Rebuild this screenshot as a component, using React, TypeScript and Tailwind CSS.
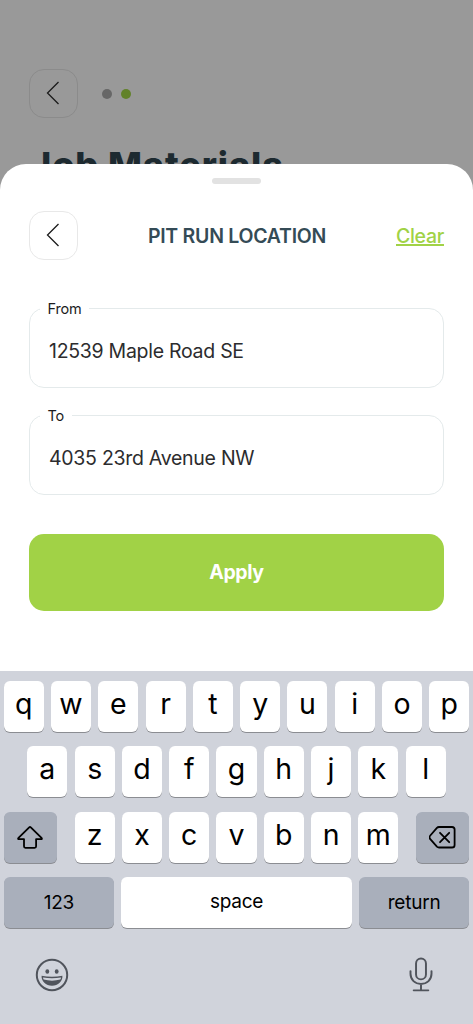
import React from "react";

const BackButton = ({ className }: { className: string }) => {
  return (
    <button
      aria-label="Back"
      className={`w-[49px] h-[49px] rounded-[15px] border flex items-center justify-center pr-[2px] pb-[1px] ${className}`}
    >
      <svg width="14" height="24" viewBox="0 0 14 24" fill="none">
        <path d="M12.5 1L1.5 12l11 11" stroke="currentColor" strokeWidth="1.3" />
      </svg>
    </button>
  );
};

const Field = ({ label, value }: { label: string; value: string }) => {
  return (
    <fieldset className="h-[87px] rounded-[15px] border border-[#e4eaeb] pl-[10px]">
      <legend className="pl-[7.5px] pr-2 text-[14.5px] leading-[16px] tracking-[-0.2px] text-[#1c1c1e]">
        {label}
      </legend>
      <p className="mt-[20px] pl-[9px] text-[19.5px] leading-[28px] tracking-[-0.28px] text-[#2c2c2e]">
        {value}
      </p>
    </fieldset>
  );
};

const Key = ({ letter }: { letter: string }) => {
  return (
    <button className="w-[40.1px] h-[51px] rounded-[6px] bg-white shadow-[0_1px_0_#8b8d92] text-[28.5px] leading-[29px] font-normal text-black flex justify-center pt-[8px]">
      {letter}
    </button>
  );
};

const DarkKey = ({
  className,
  children,
}: {
  className: string;
  children: React.ReactNode;
}) => {
  return (
    <button
      className={`h-[51px] rounded-[6px] bg-[#a9afbb] shadow-[0_1px_0_#8b8d92] text-black text-[19px] tracking-[-0.2px] flex items-center justify-center ${className}`}
    >
      {children}
    </button>
  );
};

const Keyboard = () => {
  return (
    <div className="h-[353px] bg-[#d0d3db] px-[3.7px] pt-[9.5px] flex flex-col">
      <div className="flex flex-col gap-[14.5px]">
        <div className="flex justify-between">
          {"qwertyuiop".split("").map((l) => (
            <Key key={l} letter={l} />
          ))}
        </div>
        <div className="flex justify-center gap-[7.2px]">
          {"asdfghjkl".split("").map((l) => (
            <Key key={l} letter={l} />
          ))}
        </div>
        <div className="flex justify-between">
          <DarkKey className="w-[53px]">
            <svg width="26" height="23" viewBox="0 0 26 23" fill="none">
              <path
                d="M12.2 1.3a1.2 1.2 0 0 1 1.6 0l10.7 10.6c.7.8.4 1.3-.4 1.3h-5v7.1c0 .9-.5 1.5-1.4 1.5H8.4C7.5 21.8 7 21.2 7 20.3v-7.1H2c-.9 0-1.2-.6-.5-1.3z"
                stroke="currentColor"
                strokeWidth="1.8"
                strokeLinejoin="round"
              />
            </svg>
          </DarkKey>
          <div className="flex gap-[7.2px]">
            {"zxcvbnm".split("").map((l) => (
              <Key key={l} letter={l} />
            ))}
          </div>
          <DarkKey className="w-[53px]">
            <svg width="27" height="23" viewBox="0 0 27 23" fill="none">
              <path
                d="M10 1h13a2.6 2.6 0 0 1 2.6 2.6v15.3a2.6 2.6 0 0 1-2.6 2.6H10a3 3 0 0 1-2.1-.9L1.3 13.2a2.7 2.7 0 0 1 0-3.7L7.9 1.9A3 3 0 0 1 10 1z"
                stroke="currentColor"
                strokeWidth="1.8"
              />
              <path
                d="M11 6.8l9.2 9.4M20.2 6.8L11 16.2"
                stroke="currentColor"
                strokeWidth="1.8"
                strokeLinecap="round"
              />
            </svg>
          </DarkKey>
        </div>
        <div className="flex gap-[7.2px]">
          <DarkKey className="w-[110.5px] pt-[2px]">123</DarkKey>
          <button className="flex-1 h-[51px] rounded-[6px] bg-white shadow-[0_1px_0_#8b8d92] text-[19px] tracking-[-0.3px] text-black pb-[1px]">
            space
          </button>
          <DarkKey className="w-[110.5px] pt-[2px]">return</DarkKey>
        </div>
      </div>
      <div className="flex justify-between items-center mt-[29px] pl-[31px] pr-[36px] text-[#50545c]">
        <svg width="34" height="34" viewBox="0 0 34 34" fill="none">
          <circle cx="17" cy="17" r="15.2" stroke="currentColor" strokeWidth="2" />
          <ellipse cx="12.3" cy="13.5" rx="1.9" ry="2.3" fill="currentColor" />
          <ellipse cx="21.7" cy="13.5" rx="1.9" ry="2.3" fill="currentColor" />
          <path
            d="M6.6 17.8c6.6 1.3 14.2 1.3 20.8 0 .5 5.4-4.4 10-10.4 10S6.1 23.2 6.6 17.8z"
            fill="currentColor"
          />
          <path
            d="M8 19.4c5.9 1 12.1 1 18 0-.1.9-.3 1.600-.7 2.200-5.200 1.400-11.400 1.400-16.600 0-.4-.6-.6-1.300-.7-2.200z"
            fill="#d0d3db"
          />
        </svg>
        <svg width="24" height="35" viewBox="0 0 24 36" fill="none">
          <g stroke="currentColor" strokeWidth="2" strokeLinecap="round">
            <rect x="6.9" y="1.5" width="10.2" height="21.5" rx="5.1" />
            <path d="M1.2 14.5v2.8c0 6.2 4.6 10.4 10.8 10.4s10.8-4.2 10.8-10.4v-2.8M12 27.7v6.6M4.5 34.3h15" />
          </g>
        </svg>
      </div>
    </div>
  );
};

const App = () => {
  return (
    <div className="w-[473px] h-[1024px] bg-[#999999] overflow-hidden flex flex-col font-['Inter','Liberation_Sans',sans-serif]">
      <div className="h-[164px] shrink-0 pl-[29px] pt-[69px]">
        <div className="flex items-center">
          <BackButton className="border-[#8b8b8b] text-[#1b1b1b]" />
          <div className="ml-[24px] flex gap-[9px]">
            <span className="w-[10px] h-[10px] rounded-full bg-[#676767]" />
            <span className="w-[10px] h-[10px] rounded-full bg-[#62822a]" />
          </div>
        </div>
        <h1 className="ml-[1px] mt-[26px] text-[36px] leading-[42px] font-extrabold tracking-[0.9px] text-[#1d2a30] whitespace-nowrap">
          Job Materials
        </h1>
      </div>

      <div className="relative h-[507px] shrink-0 rounded-t-[26px] bg-white px-[29px] pt-[14px]">
        <div className="mx-auto w-[49px] h-[6px] rounded-full bg-[#e2e2e2]" />
        <div className="mt-[27px] flex items-center justify-between">
          <BackButton className="border-[#e8e8e8] text-[#1b1b1b]" />
          <h2 className="pt-[2px] text-[19.5px] font-semibold tracking-[-0.27px] text-[#344b56]">
            PIT RUN LOCATION
          </h2>
          <a className="pt-[2px] text-[19.5px] font-medium tracking-[-0.3px] text-[#a1d246] underline decoration-[1.5px]">
            Clear
          </a>
        </div>
        <div className="mt-[40.5px] flex flex-col gap-[20px]">
          <Field label="From" value="12539 Maple Road SE" />
          <Field label="To" value="4035 23rd Avenue NW" />
        </div>
        <button className="mt-[39.5px] w-full h-[77px] rounded-[15px] bg-[#a1d246] text-[19.5px] font-bold tracking-[-0.4px] text-white">
          Apply
        </button>
      </div>

      <Keyboard />
    </div>
  );
};

export default App;
